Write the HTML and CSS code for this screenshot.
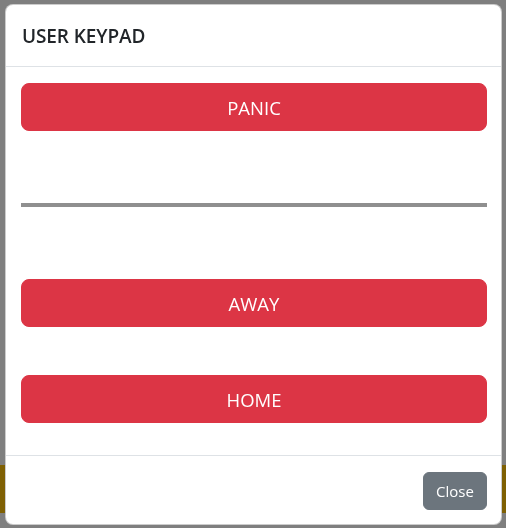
FILE: index.html
```html
<!DOCTYPE html>
<html lang="en">
<head>
<meta charset="utf-8">
<title>User Keypad</title>
<link rel="stylesheet" href="styles.css">
</head>
<body>
<div class="page">
  <div class="strip"></div>
</div>
<div class="backdrop"></div>
<div class="modal">
  <div class="modal-header">
    <h5 class="modal-title">USER KEYPAD</h5>
  </div>
  <div class="modal-body">
    <button class="btn btn-danger">PANIC</button>
    <hr class="divider">
    <button class="btn btn-danger btn-away">AWAY</button>
    <button class="btn btn-danger btn-home">HOME</button>
  </div>
  <div class="modal-footer">
    <button class="btn-close">Close</button>
  </div>
</div>
</body>
</html>
```

FILE: styles.css
```css
* { box-sizing: border-box; }
html, body { margin: 0; padding: 0; }
body {
  background: #ffffff;
  font-family: "Open Sans", "Liberation Sans", sans-serif;
  color: #212529;
  width: 506px;
  height: 528px;
  overflow: hidden;
}
.page {
  height: 528px;
  padding-top: 465px;
}
.strip {
  height: 48px;
  background: #ffc107;
}
.backdrop {
  position: fixed;
  inset: 0;
  background: rgba(0, 0, 0, 0.5);
}
.modal {
  position: absolute;
  top: 4px;
  left: 5px;
  width: 497px;
  background: #ffffff;
  border: 1px solid rgba(0, 0, 0, 0.2);
  border-radius: 8px;
  display: flex;
  flex-direction: column;
}
.modal-header {
  padding: 16px 16px 15px;
  border-bottom: 1px solid #dee2e6;
}
.modal-title {
  margin: 0;
  font-size: 19px;
  line-height: 30px;
  font-weight: 600;
  color: #212529;
  letter-spacing: -0.1px;
}
.modal-body {
  padding: 16px 14px 32px 15px;
  display: flex;
  flex-direction: column;
}
.btn {
  font-family: inherit;
  border: 1px solid transparent;
  border-radius: 8px;
  height: 48px;
  font-size: 18.5px;
  line-height: 27px;
  padding: 0 16px;
  width: 100%;
  cursor: pointer;
}
.btn-danger {
  background: #dc3545;
  border-color: #dc3545;
  color: #ffffff;
}
.divider {
  margin: 72px 0 0;
  height: 4px;
  border: 0;
  background: #8f8f8f;
}
.btn-away { margin-top: 72px; }
.btn-home { margin-top: 48px; }
.modal-footer {
  border-top: 1px solid #dee2e6;
  padding: 16px 14px 14px;
  display: flex;
  justify-content: flex-end;
}
.btn-close {
  font-family: inherit;
  background: #6c757d;
  border: 1px solid #6c757d;
  color: #ffffff;
  border-radius: 6px;
  height: 38px;
  width: 64px;
  font-size: 15px;
  padding: 0;
  cursor: pointer;
}
```
